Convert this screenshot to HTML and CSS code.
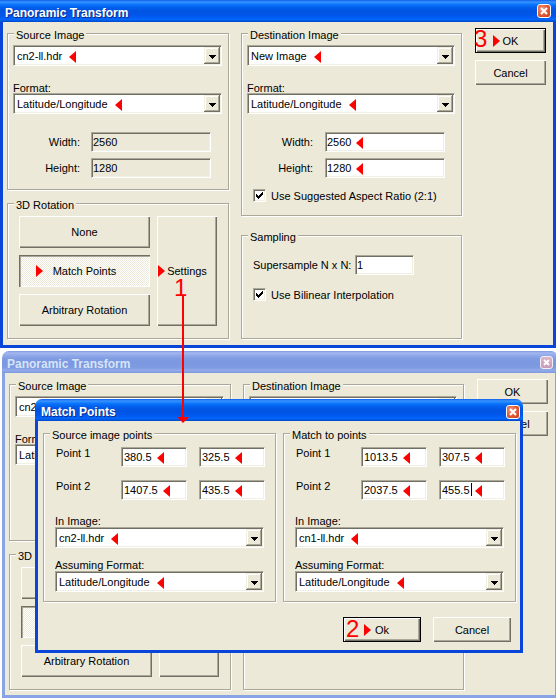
FILE: index.html
```html
<!DOCTYPE html>
<html>
<head>
<meta charset="utf-8">
<title>Panoramic Transform</title>
<link rel="stylesheet" href="styles.css">
</head>
<body>

<!-- front window -->
<div class="win win-main">
  <div class="tbar"><span class="ttext">Panoramic Transform</span><span class="xbtn"><svg width="12" height="12" viewBox="0 0 12 12"><path d="M3 3L9 9M9 3L3 9" stroke="#fff" stroke-width="2"/></svg></span></div>
  <div class="client main-client">
    <div class="col col-a">
      <div class="grp g-src">
        <div class="gt">Source Image</div>
        <div class="combo"><span class="cv">cn2-ll.hdr<i class="mk"></i></span><span class="dd"><svg width="7" height="4" viewBox="0 0 7 4"><path d="M0 0h7v1h-1v1h-1v1h-1v1h-1v-1h-1v-1h-1v-1h-1z"/></svg></span></div>
        <div class="lbl">Format:</div>
        <div class="combo cmb-2"><span class="cv">Latitude/Longitude<i class="mk"></i></span><span class="dd"><svg width="7" height="4" viewBox="0 0 7 4"><path d="M0 0h7v1h-1v1h-1v1h-1v1h-1v-1h-1v-1h-1v-1h-1z"/></svg></span></div>
        <div class="frow fr-1"><span class="fl">Width:</span><span class="edit dis">2560</span></div>
        <div class="frow fr-2"><span class="fl">Height:</span><span class="edit dis">1280</span></div>
      </div>
      <div class="grp g-rot">
        <div class="gt">3D Rotation</div>
        <div class="rot">
          <div class="rot-list">
            <div class="btn">None</div>
            <div class="btn pressed"><i class="mkr mkr-mp"></i>Match Points</div>
            <div class="btn">Arbitrary Rotation</div>
          </div>
          <div class="btn set"><i class="mkr mkr-set"></i>Settings</div>
        </div>
      </div>
    </div>
    <div class="col col-b">
      <div class="grp g-dst">
        <div class="gt">Destination Image</div>
        <div class="combo"><span class="cv">New Image<i class="mk"></i></span><span class="dd"><svg width="7" height="4" viewBox="0 0 7 4"><path d="M0 0h7v1h-1v1h-1v1h-1v1h-1v-1h-1v-1h-1v-1h-1z"/></svg></span></div>
        <div class="lbl">Format:</div>
        <div class="combo cmb-2"><span class="cv">Latitude/Longitude<i class="mk"></i></span><span class="dd"><svg width="7" height="4" viewBox="0 0 7 4"><path d="M0 0h7v1h-1v1h-1v1h-1v1h-1v-1h-1v-1h-1v-1h-1z"/></svg></span></div>
        <div class="frow fr-1"><span class="fl">Width:</span><span class="edit">2560<i class="mk f"></i></span></div>
        <div class="frow fr-2"><span class="fl">Height:</span><span class="edit">1280<i class="mk f"></i></span></div>
        <div class="chk ch-asp"><span class="cb"><svg width="11" height="11" viewBox="0 0 11 11"><path d="M2 4h1v3h-1zM3 5h1v3h-1zM4 6h1v3h-1zM5 5h1v3h-1zM6 4h1v3h-1zM7 3h1v3h-1zM8 2h1v3h-1z"/></svg></span><span>Use Suggested Aspect Ratio (2:1)</span></div>
      </div>
      <div class="grp g-smp">
        <div class="gt">Sampling</div>
        <div class="srow"><span class="sl">Supersample N x N:</span><span class="edit ss">1</span></div>
        <div class="chk ch-bil"><span class="cb"><svg width="11" height="11" viewBox="0 0 11 11"><path d="M2 4h1v3h-1zM3 5h1v3h-1zM4 6h1v3h-1zM5 5h1v3h-1zM6 4h1v3h-1zM7 3h1v3h-1zM8 2h1v3h-1z"/></svg></span><span>Use Bilinear Interpolation</span></div>
      </div>
    </div>
    <div class="col col-c">
      <div class="btn def"><i class="mkr mkr-ok"></i>OK</div>
      <div class="btn cnb">Cancel</div>
    </div>
  </div>
</div>

<!-- back (inactive) window: only the parts not covered by the dialog carry text -->
<div class="win win-back">
  <div class="tbar"><span class="ttext">Panoramic Transform</span><span class="xbtn"><svg width="11" height="11" viewBox="0 0 11 11"><path d="M3 3L8 8M8 3L3 8" stroke="#fff" stroke-width="1.8"/></svg></span></div>
  <div class="client main-client">
    <div class="col col-a">
      <div class="grp g-src">
        <div class="gt">Source Image</div>
        <div class="combo"><span class="cv">cn2-ll.hdr</span><span class="dd"><svg width="7" height="4" viewBox="0 0 7 4"><path d="M0 0h7v1h-1v1h-1v1h-1v1h-1v-1h-1v-1h-1v-1h-1z"/></svg></span></div>
        <div class="lbl">Format:</div>
        <div class="combo cmb-2"><span class="cv">Latitude/Longitude</span><span class="dd"><svg width="7" height="4" viewBox="0 0 7 4"><path d="M0 0h7v1h-1v1h-1v1h-1v1h-1v-1h-1v-1h-1v-1h-1z"/></svg></span></div>
        <div class="frow fr-1"><span class="fl"></span><span class="edit dis"></span></div>
        <div class="frow fr-2"><span class="fl"></span><span class="edit dis"></span></div>
      </div>
      <div class="grp g-rot">
        <div class="gt">3D Rotation</div>
        <div class="rot">
          <div class="rot-list">
            <div class="btn"></div>
            <div class="btn pressed"></div>
            <div class="btn">Arbitrary Rotation</div>
          </div>
          <div class="btn set"></div>
        </div>
      </div>
    </div>
    <div class="col col-b">
      <div class="grp g-dst">
        <div class="gt">Destination Image</div>
        <div class="combo"><span class="cv"></span><span class="dd"></span></div>
        <div class="lbl lbl-empty"></div>
        <div class="combo cmb-2"><span class="cv"></span><span class="dd"></span></div>
        <div class="frow fr-1"><span class="fl"></span><span class="edit"></span></div>
        <div class="frow fr-2"><span class="fl"></span><span class="edit"></span></div>
        <div class="chk ch-asp"><span class="cb"></span></div>
      </div>
      <div class="grp g-smp">
        <div class="gt gt-empty"></div>
        <div class="srow"><span class="sl"></span><span class="edit ss"></span></div>
        <div class="chk ch-bil"><span class="cb"></span></div>
      </div>
    </div>
    <div class="col col-c">
      <div class="btn">OK</div>
      <div class="btn cnb">Cancel</div>
    </div>
  </div>
</div>

<!-- Match Points dialog -->
<div class="dlg">
  <div class="tbar"><span class="ttext">Match Points</span><span class="xbtn"><svg width="12" height="12" viewBox="0 0 12 12"><path d="M3 3L9 9M9 3L3 9" stroke="#fff" stroke-width="2"/></svg></span></div>
  <div class="client dlg-client">
    <div class="pgroups">
      <div class="grp g-pt">
        <div class="gt">Source image points</div>
        <div class="prow pr-1"><span class="pl">Point 1</span><span class="edit p">380.5<i class="mk f"></i></span><span class="edit p">325.5<i class="mk f"></i></span></div>
        <div class="prow pr-2"><span class="pl">Point 2</span><span class="edit p">1407.5<i class="mk f"></i></span><span class="edit p">435.5<i class="mk f"></i></span></div>
        <div class="lbl l-in">In Image:</div>
        <div class="combo"><span class="cv">cn2-ll.hdr<i class="mk"></i></span><span class="dd"><svg width="7" height="4" viewBox="0 0 7 4"><path d="M0 0h7v1h-1v1h-1v1h-1v1h-1v-1h-1v-1h-1v-1h-1z"/></svg></span></div>
        <div class="lbl l-as">Assuming Format:</div>
        <div class="combo"><span class="cv">Latitude/Longitude<i class="mk"></i></span><span class="dd"><svg width="7" height="4" viewBox="0 0 7 4"><path d="M0 0h7v1h-1v1h-1v1h-1v1h-1v-1h-1v-1h-1v-1h-1z"/></svg></span></div>
      </div>
      <div class="grp g-pt">
        <div class="gt">Match to points</div>
        <div class="prow pr-1"><span class="pl">Point 1</span><span class="edit p">1013.5<i class="mk f"></i></span><span class="edit p">307.5<i class="mk f"></i></span></div>
        <div class="prow pr-2"><span class="pl">Point 2</span><span class="edit p">2037.5<i class="mk f"></i></span><span class="edit p">455.5<i class="caret"></i><i class="mk fc"></i></span></div>
        <div class="lbl l-in">In Image:</div>
        <div class="combo"><span class="cv">cn1-ll.hdr<i class="mk"></i></span><span class="dd"><svg width="7" height="4" viewBox="0 0 7 4"><path d="M0 0h7v1h-1v1h-1v1h-1v1h-1v-1h-1v-1h-1v-1h-1z"/></svg></span></div>
        <div class="lbl l-as">Assuming Format:</div>
        <div class="combo"><span class="cv">Latitude/Longitude<i class="mk"></i></span><span class="dd"><svg width="7" height="4" viewBox="0 0 7 4"><path d="M0 0h7v1h-1v1h-1v1h-1v1h-1v-1h-1v-1h-1v-1h-1z"/></svg></span></div>
      </div>
    </div>
    <div class="dbtns">
      <div class="btn def"><i class="mkr mkr-dok"></i>Ok</div>
      <div class="btn">Cancel</div>
    </div>
  </div>
</div>

<!-- annotations -->
<span class="num n1">1</span>
<span class="num n2">2</span>
<span class="num n3">3</span>
<span class="vline"></span>
<span class="arrowdown"></span>

</body>
</html>
```

FILE: styles.css
```css
* { box-sizing: border-box; }
html, body { margin: 0; padding: 0; }
body {
  position: relative;
  width: 556px;
  height: 700px;
  overflow: hidden;
  background: #fff;
  font-family: "Liberation Sans", Arial, sans-serif;
  font-size: 11px;
  color: #000;
}

/* ---------- windows ---------- */
.win, .dlg { position: absolute; display: flex; flex-direction: column; }
.win { width: 556px; }
.win-main { left: 0; top: 0; height: 348px; }
.win-back { left: 2px; top: 351px; height: 347px; }
.dlg { left: 35px; top: 399px; width: 488px; height: 254px; }

.tbar {
  flex: none;
  height: 22px;
  display: flex;
  justify-content: space-between;
  align-items: flex-start;
  padding: 5px 5px 0 5px;
  font-size: 12px;
  font-weight: bold;
  line-height: 16px;
  color: #fff;
  text-shadow: 1px 1px 0 #0c2a8a;
  background: linear-gradient(to bottom, #0a5ee8 0%, #3a93ff 9%, #2088ff 14%, #0a72fb 22%, #0262ee 32%, #0056e4 45%, #0054e3 55%, #0056ea 70%, #005df3 80%, #0367fb 88%, #005be9 93%, #0047c4 100%);
}
.win-back .tbar, .dlg .tbar { border-radius: 7px 7px 0 0; }
.dlg .tbar { padding-left: 6px; }
.win-back .tbar {
  color: #d8e4f8;
  text-shadow: none;
  background: linear-gradient(to bottom, #7f9ae0 0%, #a5b8ef 9%, #93abea 18%, #7f9be2 35%, #7a97e0 55%, #7f9ce2 75%, #92aaea 88%, #7d98df 100%);
}

.xbtn {
  flex: none;
  width: 14px;
  height: 14px;
  margin-top: -1px;
  border: 1px solid #fff;
  border-radius: 3px;
  background: radial-gradient(circle at 35% 35%, #f3a08a 0%, #e2603c 45%, #c93d18 100%);
  display: flex;
  align-items: center;
  justify-content: center;
}
.xbtn svg { display: block; }
.dlg .xbtn { margin-top: 1px; margin-right: -2px; }
.win-back .xbtn {
  width: 13px;
  height: 13px;
  margin-top: 0;
  background: linear-gradient(#d8b6c8, #c79bb4);
  border-color: #f4eef6;
}

.client {
  flex: 1;
  background: #ece9d8;
  border: 3px solid #0845d8;
  border-top: 0;
}
.win-back .client { border-color: #8aa3e4; }

/* window body grid */
.main-client {
  display: grid;
  grid-template-columns: 222px 221px 72px;
  column-gap: 12px;
  align-items: start;
  padding: 11px 0 0 4px;
}
.col { display: flex; flex-direction: column; }
.col-c { margin: -5px 0 0 1px; }

/* ---------- group boxes ---------- */
.grp {
  border: 1px solid #aca899;
  box-shadow: inset 1px 1px 0 #fff, 1px 1px 0 #fff;
}
.gt {
  display: table;
  margin: -5px 0 -2px 6px;
  padding: 0 2px;
  line-height: 13px;
  background: #ece9d8;
  position: relative;
}
.gt::before {
  content: "";
  position: absolute;
  left: 0;
  right: 0;
  top: -2px;
  height: 2px;
  background: #ece9d8;
}
.gt-empty { height: 13px; width: 60px; }
.g-src { height: 157px; }
.g-rot { height: 136px; margin-top: 13px; }
.g-dst { height: 183px; }
.g-smp { height: 104px; margin-top: 19px; }

/* ---------- combos ---------- */
.combo {
  display: flex;
  height: 21px;
  padding: 1px;
  background: #fff;
  border: 1px solid;
  border-color: #aca899 #fff #fff #aca899;
  box-shadow: inset 1px 1px 0 #716f64, inset -1px -1px 0 #f1efe2;
  margin: 5px 0 0 5px;
}
.g-src .combo { width: 209px; }
.g-dst .combo { width: 208px; }
.combo.cmb-2 { margin-top: -1px; }
.cv {
  flex: 1;
  padding: 2px 0 0 2px;
  line-height: 15px;
  white-space: nowrap;
}
.dd {
  flex: none;
  width: 16px;
  height: 17px;
  display: flex;
  justify-content: center;
  align-items: center;
  padding-top: 2px;
  background: #ece9d8;
  box-shadow: inset -1px -1px 0 #716f64, inset 1px 1px 0 #f1efe2, inset -2px -2px 0 #aca899, inset 2px 2px 0 #fff;
}
.dd svg { display: block; }

.lbl {
  line-height: 11px;
  margin: 17px 0 0 5px;
}
.lbl-empty { height: 11px; }

/* ---------- edit fields ---------- */
.edit {
  display: block;
  height: 20px;
  padding: 1px 1px;
  line-height: 16px;
  white-space: nowrap;
  background: #fff;
  border: 1px solid;
  border-color: #aca899 #fff #fff #aca899;
  box-shadow: inset 1px 1px 0 #716f64, inset -1px -1px 0 #f1efe2;
}
.edit.dis { background: #ece9d8; }

.frow { display: flex; line-height: 20px; height: 20px; }
.fr-1 { margin-top: 18px; }
.fr-2 { margin-top: 6px; }
.fl { text-align: right; }
.g-src .fl { width: 72px; margin-right: 11px; }
.g-src .edit { width: 120px; }
.g-dst .fl { width: 71px; margin-right: 12px; }
.g-dst .edit { width: 120px; }

.srow { display: flex; line-height: 20px; height: 20px; margin: 13px 0 0 11px; }
.sl { width: 102px; }
.edit.ss { width: 59px; }

/* ---------- checkboxes ---------- */
.chk { display: flex; align-items: flex-start; gap: 5px; line-height: 14px; min-height: 14px; margin: 11px 0 0 11px; }
.ch-bil { margin-top: 13px; }
.cb {
  flex: none;
  width: 13px;
  height: 13px;
  background: #fff;
  border: 1px solid;
  border-color: #aca899 #fff #fff #aca899;
  box-shadow: inset 1px 1px 0 #716f64, inset -1px -1px 0 #f1efe2;
}
.cb svg { display: block; }

/* ---------- buttons ---------- */
.btn {
  display: flex;
  align-items: center;
  justify-content: center;
  white-space: nowrap;
  background: #ece9d8;
  box-shadow: inset 1px 1px 0 #fff, inset -1px -1px 0 #716f64, inset -2px -2px 0 #aca899;
}
.btn.def { border: 1px solid #000; }
.btn.pressed {
  background: repeating-conic-gradient(#fff 0 25%, #ece9d8 0 50%) 0 0 / 2px 2px;
  box-shadow: inset 1px 1px 0 #716f64, inset 2px 2px 0 #aca899, inset -1px -1px 0 #fff;
}
.col-c .btn { height: 25px; }
.col-c .cnb { margin-top: 7px; }

.rot { display: flex; gap: 7px; margin: 6px 0 0 11px; }
.rot-list { display: flex; flex-direction: column; gap: 7px; width: 131px; }
.rot-list .btn { height: 32px; }
.btn.set { width: 60px; height: 110px; }

/* ---------- red markers ---------- */
.mk {
  display: inline-block;
  width: 0;
  height: 0;
  border-style: solid;
  border-width: 6px 7px 6px 0;
  border-color: transparent #f00 transparent transparent;
  vertical-align: -3px;
  margin-left: 7px;
}
.mk.f { margin-left: 5px; }
.mk.fc { margin-left: 3px; }
.caret {
  display: inline-block;
  width: 1px;
  height: 13px;
  background: #000;
  vertical-align: -2px;
  margin-left: 1px;
}
.mkr {
  display: inline-block;
  flex: none;
  width: 0;
  height: 0;
  border-style: solid;
  border-width: 6px 0 6px 7px;
  border-color: transparent transparent transparent #f00;
}
.mkr-mp { margin: 0 10px 0 -17px; }
.mkr-set { margin: 0 2px 0 -9px; }
.mkr-ok { margin: 0 3px 0 -10px; }
.mkr-dok { margin: 0 4px 0 -11px; }

/* ---------- match points dialog body ---------- */
.dlg-client { padding: 12px 0 0 5px; display: flex; flex-direction: column; }
.pgroups { display: flex; gap: 7px; }
.g-pt { width: 233px; height: 169px; }
.prow { display: flex; margin-left: 12px; }
.pr-1 { margin-top: 7px; }
.pr-2 { margin-top: 13px; }
.pl { width: 65px; line-height: 13px; }
.edit.p { width: 66px; padding-left: 2px; }
.edit.p + .edit.p { margin-left: 12px; }
.l-in { margin: 16px 0 0 11px; }
.l-as { margin: 12px 0 0 11px; }
.g-pt .combo { width: 209px; margin: 0 0 0 11px; }
.dbtns { display: flex; justify-content: flex-end; gap: 12px; margin-top: 15px; padding-right: 9px; }
.dbtns .btn { width: 78px; height: 25px; }

/* ---------- annotations ---------- */
.num {
  position: absolute;
  font-size: 24px;
  line-height: 24px;
  color: #f00;
}
.n1 { left: 174px; top: 276px; }
.n2 { left: 346px; top: 617px; }
.n3 { left: 474px; top: 27px; }
.vline {
  position: absolute;
  left: 182px;
  top: 296px;
  width: 2px;
  height: 121px;
  background: #f00;
}
.arrowdown {
  position: absolute;
  left: 177px;
  top: 417px;
  width: 0;
  height: 0;
  border-style: solid;
  border-width: 6px 6px 0 6px;
  border-color: #f00 transparent transparent transparent;
}
```
